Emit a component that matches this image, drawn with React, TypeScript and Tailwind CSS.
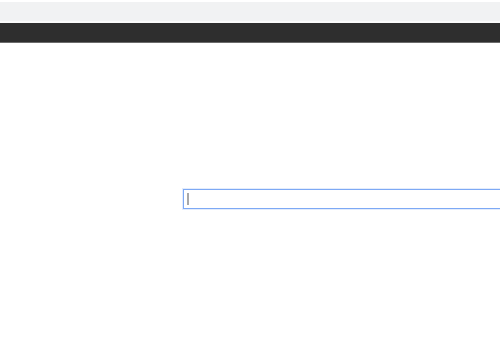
import React from "react";

export default function App() {
  return (
    <div className="w-[500px] h-[350px] bg-white overflow-hidden flex flex-col" style={{ fontFamily: '"Liberation Sans", Arial, sans-serif' }}>
      <div className="h-[2px] bg-white" />
      <div className="h-[19px] bg-[#f1f2f3]" />
      <div className="h-[2px] bg-[#fafafa]" />
      <div className="h-[19px] bg-[#2e2e2e]" />
      <div className="h-[1px] bg-[#6b6b6b]" />
      <div className="flex-1">
        <div className="mt-[146px] ml-[183px] w-[330px] h-[20px] border border-[#7da9f5] shadow-[0_0_0_1px_#e3ecfc] bg-white flex items-center pl-[3px]">
          <div className="w-[2px] h-[12px] bg-[#a8a8a8]" />
        </div>
      </div>
    </div>
  );
}
